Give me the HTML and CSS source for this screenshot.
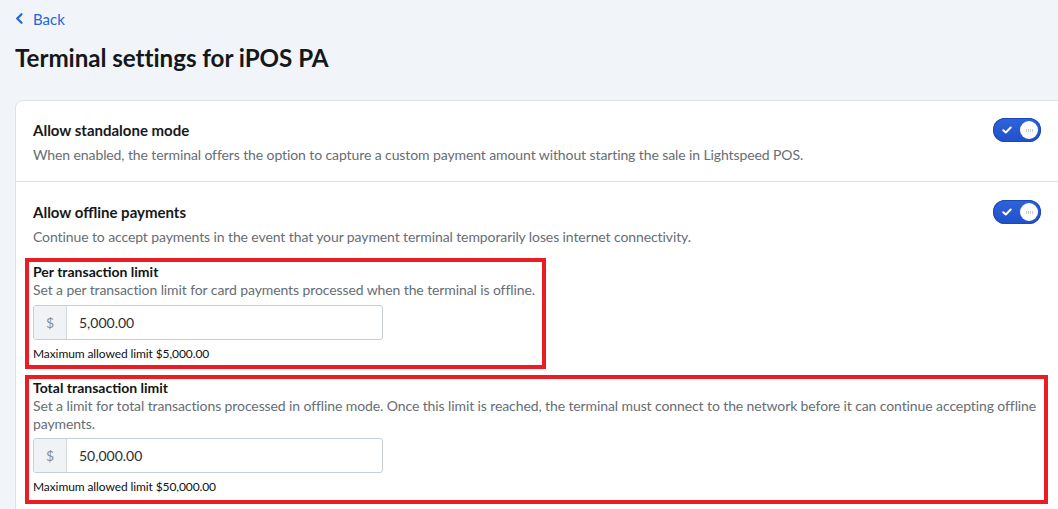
FILE: index.html
```html
<!DOCTYPE html>
<html lang="en">
<head>
<meta charset="utf-8">
<title>Terminal settings for iPOS PA</title>
<link rel="stylesheet" href="styles.css">
</head>
<body>
<div class="page">
  <a class="back" href="#">
    <svg class="back-icon" width="8" height="11" viewBox="0 0 8 11" aria-hidden="true">
      <path d="M6.5 1.2 L2.2 5.5 L6.5 9.8" fill="none" stroke="currentColor" stroke-width="2.2" stroke-linecap="round" stroke-linejoin="round"/>
    </svg>
    <span>Back</span>
  </a>
  <h1 class="title">Terminal settings for iPOS PA</h1>

  <div class="card">
    <section class="setting">
      <div class="setting-head">
        <div class="setting-text">
          <h2 class="setting-title">Allow standalone mode</h2>
          <p class="setting-desc">When enabled, the terminal offers the option to capture a custom payment amount without starting the sale in Lightspeed POS.</p>
        </div>
        <span class="toggle">
          <svg class="toggle-check" width="10" height="8" viewBox="0 0 10 8" aria-hidden="true"><path d="M1.3 4.2 L3.8 6.5 L8.7 1.5" fill="none" stroke="#fff" stroke-width="2" stroke-linecap="round" stroke-linejoin="round"/></svg>
          <span class="toggle-knob"><i></i><i></i><i></i><i></i></span>
        </span>
      </div>
    </section>

    <section class="setting">
      <div class="setting-head">
        <div class="setting-text">
          <h2 class="setting-title">Allow offline payments</h2>
          <p class="setting-desc">Continue to accept payments in the event that your payment terminal temporarily loses internet connectivity.</p>
        </div>
        <span class="toggle">
          <svg class="toggle-check" width="10" height="8" viewBox="0 0 10 8" aria-hidden="true"><path d="M1.3 4.2 L3.8 6.5 L8.7 1.5" fill="none" stroke="#fff" stroke-width="2" stroke-linecap="round" stroke-linejoin="round"/></svg>
          <span class="toggle-knob"><i></i><i></i><i></i><i></i></span>
        </span>
      </div>

      <div class="limit limit-per">
        <h3 class="limit-title">Per transaction limit</h3>
        <p class="limit-desc">Set a per transaction limit for card payments processed when the terminal is offline.</p>
        <div class="money-input">
          <span class="money-prefix">$</span>
          <span class="money-value">5,000.00</span>
        </div>
        <p class="limit-note">Maximum allowed limit $5,000.00</p>
      </div>

      <div class="limit limit-total">
        <h3 class="limit-title">Total transaction limit</h3>
        <p class="limit-desc">Set a limit for total transactions processed in offline mode. Once this limit is reached, the terminal must connect to the network before it can continue accepting offline payments.</p>
        <div class="money-input">
          <span class="money-prefix">$</span>
          <span class="money-value">50,000.00</span>
        </div>
        <p class="limit-note">Maximum allowed limit $50,000.00</p>
      </div>
    </section>
  </div>
</div>
</body>
</html>
```

FILE: styles.css
```css
* { box-sizing: border-box; }

html, body {
  margin: 0;
  padding: 0;
  background: #f1f4f8;
  overflow: hidden;
}

body {
  font-family: Lato, "Open Sans", Arial, sans-serif;
  color: #1b1e22;
}

.page {
  padding: 9px 0 0 15px;
  width: 1060px;
}

.back {
  display: flex;
  align-items: center;
  gap: 10px;
  color: #2566d6;
  text-decoration: none;
  font-size: 15px;
  line-height: 20px;
  height: 20px;
}

.back-icon { display: block; margin-top: -1px; }

.title {
  margin: 18px 0 0;
  font-size: 24.2px;
  line-height: 22px;
  font-weight: 700;
  color: #15181b;
  letter-spacing: -0.05px;
}

.card {
  margin-top: 31px;
  width: 1045px;
  background: #fff;
  border: 1px solid #dfe3e8;
  border-radius: 8px 0 0 0;
}

.setting {
  padding: 20px 17px 16px;
}

.setting:first-child { padding-top: 19px; padding-right: 18px; }

.setting + .setting {
  border-top: 1px solid #dcdfe3;
  padding-top: 20px;
  padding-right: 18px;
}

.setting-head {
  display: flex;
  justify-content: space-between;
  align-items: flex-start;
}

.setting-title {
  margin: 0;
  font-size: 15px;
  line-height: 20px;
  font-weight: 700;
  color: #16191c;
}

.setting-desc {
  margin: 5px 0 0;
  font-size: 14px;
  line-height: 20px;
  letter-spacing: -0.1px;
  color: #676d75;
}

.toggle {
  position: relative;
  display: flex;
  align-items: center;
  width: 48px;
  height: 24px;
  margin-top: -2px;
  border-radius: 12px;
  background: linear-gradient(180deg, #2f63dc 0%, #1f51c9 100%);
  box-shadow: inset 0 0 0 1px #1c49b8;
  flex-shrink: 0;
}

.toggle-check {
  position: absolute;
  left: 9px;
  top: 8px;
}

.toggle-knob {
  position: absolute;
  right: 3px;
  top: 3px;
  width: 18px;
  height: 18px;
  border-radius: 50%;
  background: #fff;
  display: flex;
  align-items: center;
  justify-content: center;
  gap: 1px;
}

.toggle-knob i {
  width: 1px;
  height: 3px;
  background: #c7cbd1;
}

.limit {
  margin: 11px -7px 0 -8px;
  border: 4px solid #ec1c24;
  padding: 1px 2px 2px 4px;
  width: 521px;
}

.limit-total {
  margin-top: 6px;
  width: auto;
  padding-top: 0;
  padding-bottom: 4px;
}

.limit-title {
  margin: 0;
  font-size: 14px;
  line-height: 18px;
  font-weight: 700;
  color: #121417;
}

.limit-desc {
  margin: 0;
  font-size: 14px;
  line-height: 18px;
  letter-spacing: -0.1px;
  color: #676d75;
}

.limit-total .money-input { margin-top: 5px; }

.money-input {
  display: flex;
  margin-top: 6px;
  width: 350px;
  height: 35px;
  border: 1px solid #c6ced6;
  border-radius: 3px;
  overflow: hidden;
  background: #fff;
}

.money-prefix {
  width: 33px;
  display: flex;
  align-items: center;
  justify-content: center;
  background: #f0f3f6;
  border-right: 1px solid #d5dbe1;
  color: #878d95;
  font-size: 14px;
}

.money-value {
  display: flex;
  align-items: center;
  padding-left: 12px;
  font-size: 14px;
  color: #2a2e33;
}

.limit-note {
  margin: 5px 0 0;
  font-size: 12px;
  line-height: 18px;
  letter-spacing: -0.1px;
  color: #0f1113;
}
```
